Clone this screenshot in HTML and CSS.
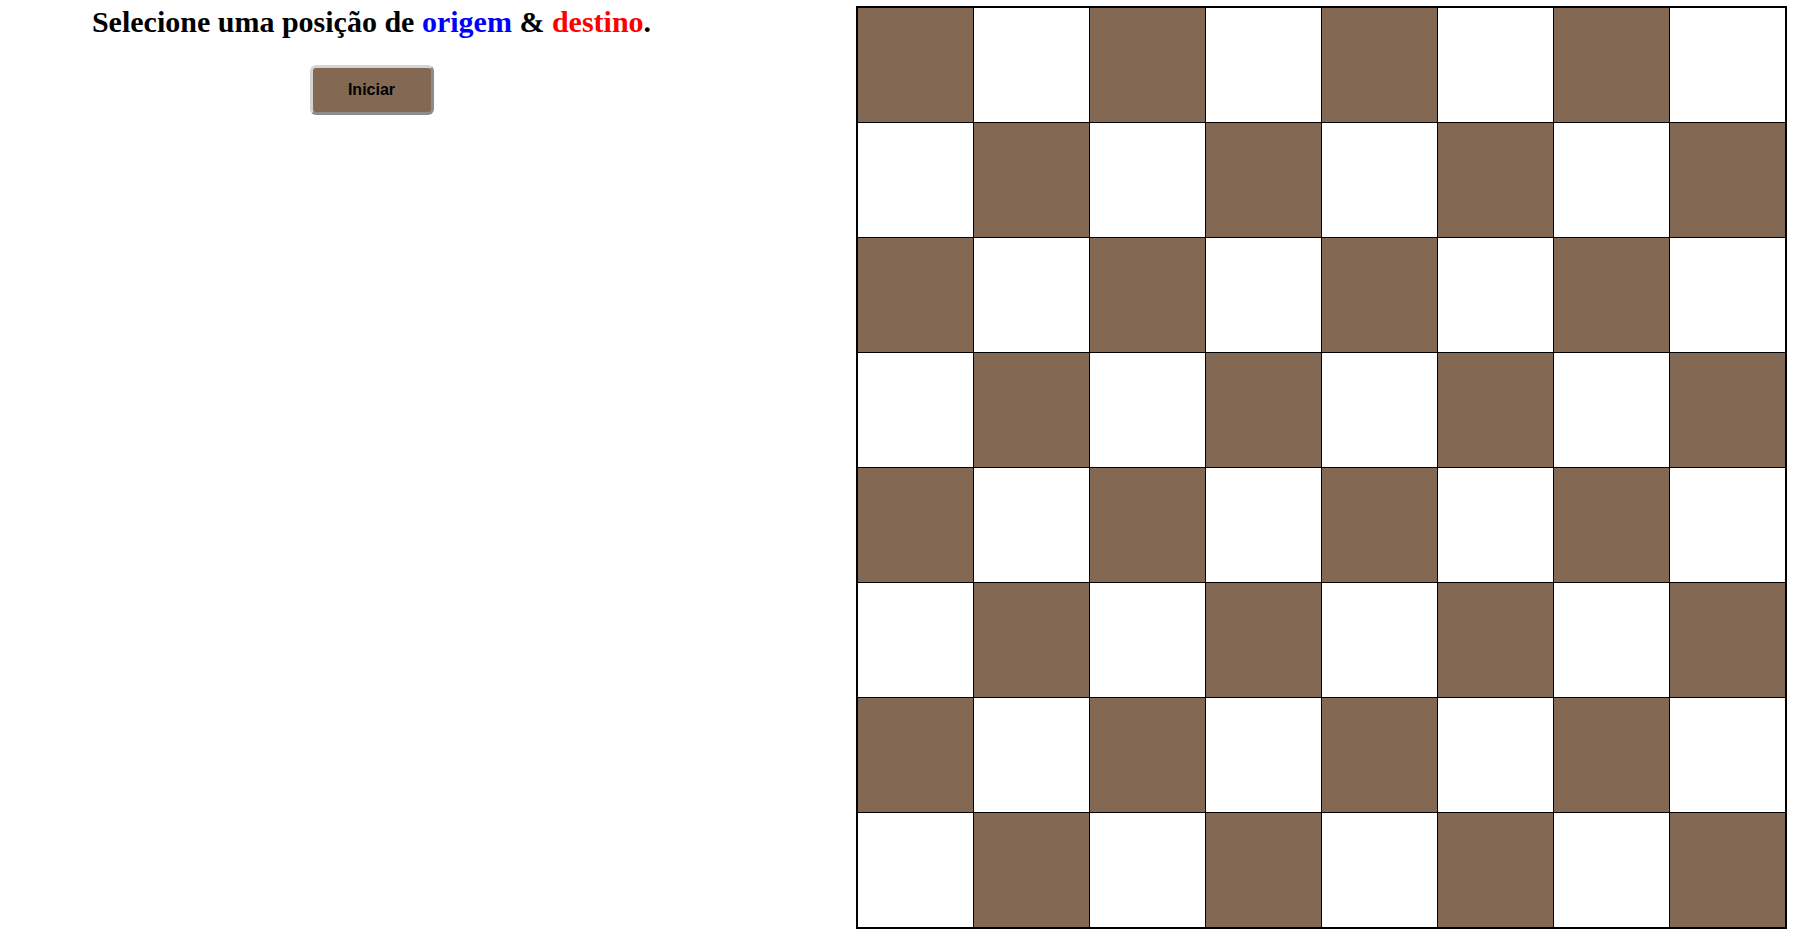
FILE: index.html
```html
<!DOCTYPE html>
<html lang="pt">
<head>
<meta charset="utf-8">
<title>Tabuleiro</title>
<link rel="stylesheet" href="styles.css">
</head>
<body>
<div class="page">
  <div class="panel">
    <h1 class="title">Selecione uma posição de <span class="origin">origem</span> &amp; <span class="dest">destino</span>.</h1>
    <button class="start" type="button">Iniciar</button>
  </div>
  <div class="board">
    <div class="cell dark"></div><div class="cell"></div><div class="cell dark"></div><div class="cell"></div><div class="cell dark"></div><div class="cell"></div><div class="cell dark"></div><div class="cell"></div>
    <div class="cell"></div><div class="cell dark"></div><div class="cell"></div><div class="cell dark"></div><div class="cell"></div><div class="cell dark"></div><div class="cell"></div><div class="cell dark"></div>
    <div class="cell dark"></div><div class="cell"></div><div class="cell dark"></div><div class="cell"></div><div class="cell dark"></div><div class="cell"></div><div class="cell dark"></div><div class="cell"></div>
    <div class="cell"></div><div class="cell dark"></div><div class="cell"></div><div class="cell dark"></div><div class="cell"></div><div class="cell dark"></div><div class="cell"></div><div class="cell dark"></div>
    <div class="cell dark"></div><div class="cell"></div><div class="cell dark"></div><div class="cell"></div><div class="cell dark"></div><div class="cell"></div><div class="cell dark"></div><div class="cell"></div>
    <div class="cell"></div><div class="cell dark"></div><div class="cell"></div><div class="cell dark"></div><div class="cell"></div><div class="cell dark"></div><div class="cell"></div><div class="cell dark"></div>
    <div class="cell dark"></div><div class="cell"></div><div class="cell dark"></div><div class="cell"></div><div class="cell dark"></div><div class="cell"></div><div class="cell dark"></div><div class="cell"></div>
    <div class="cell"></div><div class="cell dark"></div><div class="cell"></div><div class="cell dark"></div><div class="cell"></div><div class="cell dark"></div><div class="cell"></div><div class="cell dark"></div>
  </div>
</div>
</body>
</html>
```

FILE: styles.css
```css
html, body {
  margin: 0;
  padding: 0;
  background: #fff;
}

.page {
  display: grid;
  grid-template-columns: 743px auto;
  column-gap: 113px;
  padding-top: 6px;
  font-family: "Liberation Serif", "Times New Roman", serif;
}

.panel {
  display: flex;
  flex-direction: column;
  align-items: center;
}

.title {
  margin: 0;
  font-size: 30px;
  line-height: 32px;
  font-weight: bold;
  color: #000;
  white-space: nowrap;
}

.origin { color: #0000ff; }
.dest { color: #ff0000; }

.start {
  margin-top: 27px;
  width: 124px;
  height: 50px;
  background: #836953;
  border-width: 3px;
  border-style: solid;
  border-color: #d4d4d4 #8c8c8c #8c8c8c #d4d4d4;
  border-radius: 6px;
  font-family: "Liberation Sans", Arial, sans-serif;
  font-size: 16px;
  font-weight: bold;
  color: #000;
  padding: 0;
}

.board {
  width: 927px;
  height: 919px;
  border: 2px solid #000;
  background: #000;
  display: grid;
  grid-template-columns: repeat(8, 1fr);
  grid-template-rows: repeat(8, 1fr);
  gap: 1px;
}

.cell {
  background: #fff;
}

.cell.dark {
  background: #836953;
}
```
